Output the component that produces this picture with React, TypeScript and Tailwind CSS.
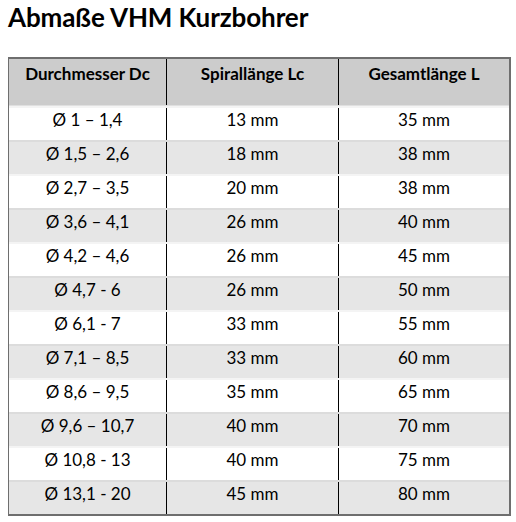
import React from 'react';

const rows = [
  ['Ø 1 – 1,4', '13 mm', '35 mm'],
  ['Ø 1,5 – 2,6', '18 mm', '38 mm'],
  ['Ø 2,7 – 3,5', '20 mm', '38 mm'],
  ['Ø 3,6 – 4,1', '26 mm', '40 mm'],
  ['Ø 4,2 – 4,6', '26 mm', '45 mm'],
  ['Ø 4,7 - 6', '26 mm', '50 mm'],
  ['Ø 6,1 - 7', '33 mm', '55 mm'],
  ['Ø 7,1 – 8,5', '33 mm', '60 mm'],
  ['Ø 8,6 – 9,5', '35 mm', '65 mm'],
  ['Ø 9,6 – 10,7', '40 mm', '70 mm'],
  ['Ø 10,8 - 13', '40 mm', '75 mm'],
  ['Ø 13,1 - 20', '45 mm', '80 mm'],
];

export default function App() {
  return (
    <div className="w-[516px] h-[522px] bg-white text-black" style={{ fontFamily: 'Lato, "Open Sans", sans-serif' }}>
      <h1 className="pl-[8px] pt-[1px] h-[57px] text-[26px] font-bold leading-[32px] tracking-[-0.1px]">
        Abmaße VHM Kurzbohrer
      </h1>
      <div className="ml-[8px] w-[503px] border-t-2 border-l border-r-2 border-b-2 border-[#6e6e6e]">
        <div className="grid grid-cols-[158px_172px_1fr] h-[47px] bg-[#cccccc] border-b border-[#e0e0e0]">
          <div className="border-r border-black text-center text-[17px] font-bold pt-[2px]">Durchmesser Dc</div>
          <div className="border-r border-black text-center text-[17px] font-bold pt-[2px]">Spirallänge Lc</div>
          <div className="text-center text-[17px] font-bold pt-[2px]">Gesamtlänge L</div>
        </div>
        {rows.map((r, i) => (
          <div
            key={i}
            className={`grid grid-cols-[158px_172px_1fr] h-[34px] text-[17px] leading-[24px] ${
              i % 2 === 1 ? 'bg-[#e6e6e6] border-t-2 border-[#dcdcdc]' : 'bg-white border-t-2 border-[#f4f4f4]'
            }`}
          >
            <div className="border-r border-black text-center">{r[0]}</div>
            <div className="border-r border-black text-center">{r[1]}</div>
            <div className="text-center">{r[2]}</div>
          </div>
        ))}
      </div>
    </div>
  );
}
